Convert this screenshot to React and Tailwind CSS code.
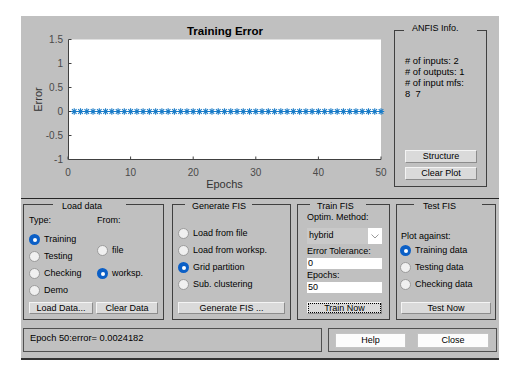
function Radio({ label, checked }) {
  return (
    <div className="flex h-[17px] items-center gap-[4px] whitespace-nowrap">
      {checked ? (
        <span className="flex h-[11px] w-[11px] shrink-0 items-center justify-center rounded-full bg-[#0b5fc6]">
          <span className="h-[4px] w-[4px] rounded-full bg-white" />
        </span>
      ) : (
        <span className="h-[11px] w-[11px] shrink-0 rounded-full border border-[#9b9b9b] bg-[#f0f0f0]" />
      )}
      <span>{label}</span>
    </div>
  );
}

function Btn({ children, className }) {
  return (
    <button
      className={
        "flex items-center justify-center border border-t-[#f4f4f4] border-l-[#f4f4f4] border-r-[#8c8c8c] border-b-[#8c8c8c] bg-[#dadada] text-[9px] leading-none text-black " +
        className
      }
    >
      {children}
    </button>
  );
}

function Panel({ title, titleClass, className, children }) {
  return (
    <div className={"relative border border-[#404040] " + className}>
      <span
        className={
          "absolute h-[13px] whitespace-nowrap bg-[#c0c0c0] leading-[13px] " +
          titleClass
        }
      >
        {title}
      </span>
      {children}
    </div>
  );
}

function Chart() {
  const X = (e) => 47 + (e * 313) / 50;
  const Y = (v) => 23.5 + (1.5 - v) * 48;
  const yTicks = [1.5, 1, 0.5, 0, -0.5, -1];
  const xTicks = [0, 10, 20, 30, 40, 50];
  const epochs = Array.from({ length: 50 }, (_, i) => i + 1);
  const y0 = Y(0);

  return (
    <svg
      width="373"
      height="182"
      className="shrink-0"
      fontFamily="'Liberation Sans', Arial, sans-serif"
    >
      <text x="204" y="19" textAnchor="middle" fontSize="11.5" fontWeight="bold" fill="#000">
        Training Error
      </text>
      <rect x="47" y="23.5" width="313" height="120" fill="#fff" />
      <path d="M47.5 23.5 V143.5 H360" stroke="#404040" fill="none" />
      {yTicks.map((v) => (
        <g key={v}>
          <line x1="47.5" x2="50.5" y1={Y(v)} y2={Y(v)} stroke="#404040" />
          <text x="42" y={Y(v) + 3.6} textAnchor="end" fontSize="10" fill="#4a4a4a">
            {v}
          </text>
        </g>
      ))}
      {xTicks.map((t) => (
        <g key={t}>
          <line x1={X(t)} x2={X(t)} y1="143.5" y2="140.5" stroke="#404040" />
          <text x={X(t)} y="159.6" textAnchor="middle" fontSize="10" fill="#4a4a4a">
            {t}
          </text>
        </g>
      ))}
      <text x="203.5" y="171.5" textAnchor="middle" fontSize="11" fill="#333">
        Epochs
      </text>
      <text
        transform="translate(21 83.5) rotate(-90)"
        textAnchor="middle"
        fontSize="11"
        fill="#333"
      >
        Error
      </text>
      <line x1={X(1)} x2={X(50)} y1={y0} y2={y0} stroke="#0072BD" strokeWidth="0.9" />
      {epochs.map((e) => {
        const x = X(e);
        return (
          <path
            key={e}
            d={`M${x - 3.2} ${y0} H${x + 3.2} M${x} ${y0 - 3.2} V${y0 + 3.2} M${x - 2.3} ${y0 - 2.3} L${x + 2.3} ${y0 + 2.3} M${x - 2.3} ${y0 + 2.3} L${x + 2.3} ${y0 - 2.3}`}
            stroke="#1a7cc8"
            strokeWidth="1.1"
            fill="none"
          />
        );
      })}
    </svg>
  );
}

export default function App() {
  return (
    <div className="min-h-screen bg-white pl-[21px] pt-[16px] font-['Liberation_Sans',Arial,sans-serif] text-[9px] text-black">
      <div className="w-[478px] border-b-2 border-[#333] bg-[#c0c0c0]">
        <div className="flex h-[183px] border-b border-[#262626]">
          <Chart />
          <Panel
            title="ANFIS Info."
            titleClass="left-[9px] top-[-9px] w-[73px] pl-[8px]"
            className="mt-[14px] flex h-[157px] w-[93px] flex-col pb-[6px] pl-[10px] pr-[9px] pt-[24px]"
          >
            <div className="text-[9.4px] leading-[11px]">
              <div># of inputs: 2</div>
              <div># of outputs: 1</div>
              <div># of input mfs:</div>
              <div>8&nbsp;&nbsp;7</div>
            </div>
            <div className="mt-auto flex flex-col gap-[4px]">
              <Btn className="h-[13px] w-[72px]">Structure</Btn>
              <Btn className="h-[13px] w-[72px]">Clear Plot</Btn>
            </div>
          </Panel>
        </div>

        <div className="px-[2px] pb-[6px] pt-[5px]">
          <div className="flex h-[116px]">
            <Panel
              title="Load data"
              titleClass="left-[29px] top-[-5px] w-[73px] pl-[9px]"
              className="w-[141px] pl-[5px] pt-[9px]"
            >
              <div className="flex">
                <div className="w-[68px]">
                  <div className="h-[13px] leading-[13px]">Type:</div>
                  <div className="mt-[4px]">
                    <Radio label="Training" checked />
                    <Radio label="Testing" />
                    <Radio label="Checking" />
                    <Radio label="Demo" />
                  </div>
                </div>
                <div>
                  <div className="h-[13px] leading-[13px]">From:</div>
                  <div className="mt-[15px]">
                    <Radio label="file" />
                  </div>
                  <div className="mt-[6px]">
                    <Radio label="worksp." checked />
                  </div>
                </div>
              </div>
              <div className="mt-[3px] flex gap-[3px]">
                <Btn className="h-[12px] w-[64px]">Load Data...</Btn>
                <Btn className="h-[12px] w-[62px]">Clear Data</Btn>
              </div>
            </Panel>

            <Panel
              title="Generate FIS"
              titleClass="left-[12px] top-[-5px] w-[67px] pl-[7px]"
              className="ml-[8px] w-[119px] px-[5px] pt-[20px]"
            >
              <Radio label="Load from file" />
              <Radio label="Load from worksp." />
              <Radio label="Grid partition" checked />
              <Radio label="Sub. clustering" />
              <Btn className="mt-[9px] h-[12px] w-full">Generate FIS ...</Btn>
            </Panel>

            <Panel
              title="Train FIS"
              titleClass="left-[12px] top-[-5px] w-[56px] pl-[7px]"
              className="ml-[6px] w-[93px] pl-[9px] pr-[7px] pt-[6px]"
            >
              <div className="h-[13px] leading-[13px]">Optim. Method:</div>
              <div className="mt-[4px] flex h-[16px] items-center bg-[#c9c9c9]">
                <span className="flex-1 pl-[2px]">hybrid</span>
                <span className="flex h-full w-[14px] items-center justify-center bg-white">
                  <svg width="8" height="5" viewBox="0 0 8 5">
                    <polyline points="0.5,0.5 4,4 7.5,0.5" fill="none" stroke="#9a9a9a" strokeWidth="1" />
                  </svg>
                </span>
              </div>
              <div className="mt-[1px] h-[13px] leading-[13px]">Error Tolerance:</div>
              <div className="h-[11px] bg-white pl-[1px] leading-[11px]">0</div>
              <div className="h-[13px] leading-[13px]">Epochs:</div>
              <div className="h-[11px] bg-white pl-[1px] leading-[11px]">50</div>
              <Btn className="mt-[9px] h-[12px] w-full outline-1 outline-offset-[-2px] outline-black outline-dotted">
                Train Now
              </Btn>
            </Panel>

            <Panel
              title="Test FIS"
              titleClass="left-[17px] top-[-5px] w-[68px] pl-[9px]"
              className="ml-[6px] w-[100px] px-[4px] pt-[26px]"
            >
              <div className="h-[11px] leading-[11px]">Plot against:</div>
              <div className="-ml-[1px]">
                <Radio label="Training data" checked />
                <Radio label="Testing data" />
                <Radio label="Checking data" />
              </div>
              <Btn className="mt-[9px] h-[12px] w-full">Test Now</Btn>
            </Panel>
          </div>

          <div className="mt-[8px] flex h-[24px] gap-[6px]">
            <div className="w-[299px] border border-[#505050] pl-[6px] pt-[3px] text-[9.3px] leading-[13px]">
              Epoch 50:error= 0.0024182
            </div>
            <div className="flex w-[169px] items-center border border-[#505050] pl-[6px]">
              <button className="h-[15px] w-[71px] border border-[#c4c4c4] bg-[#fcfcfc] text-[9px] leading-none">
                Help
              </button>
              <button className="ml-[11px] h-[15px] w-[72px] border border-[#c4c4c4] bg-[#fcfcfc] text-[9px] leading-none">
                Close
              </button>
            </div>
          </div>
        </div>
      </div>
    </div>
  );
}
